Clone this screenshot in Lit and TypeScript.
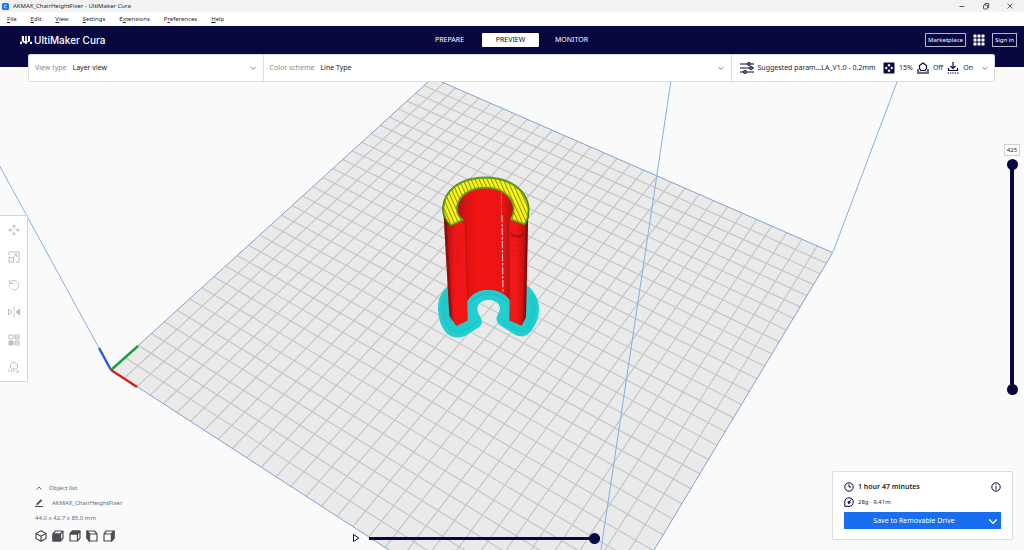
import { LitElement, html, svg, css } from "lit";
import { customElement } from "lit/decorators.js";

type Point = [number, number];

/* Corners of the build plate as seen by the camera. */
const ORIGIN: Point = [111.3, 370];
const FRONT: Point = [579.8, 673.6];
const RIGHT: Point = [832.7, 252.7];
const BACK: Point = [432.5, 77.9];
const CELLS = 30;

/* Perspective map from plate space (0..1, 0..1) to the view. */
const project = (() => {
  const [x0, y0] = ORIGIN;
  const [x1, y1] = FRONT;
  const [x2, y2] = RIGHT;
  const [x3, y3] = BACK;
  const sx = x0 - x1 + x2 - x3;
  const sy = y0 - y1 + y2 - y3;
  const dx1 = x1 - x2, dx2 = x3 - x2, dy1 = y1 - y2, dy2 = y3 - y2;
  const den = dx1 * dy2 - dx2 * dy1;
  const g = (sx * dy2 - dx2 * sy) / den;
  const h = (dx1 * sy - sx * dy1) / den;
  const a = x1 * (1 + g) - x0, b = x3 * (1 + h) - x0;
  const d = y1 * (1 + g) - y0, e = y3 * (1 + h) - y0;
  return (u: number, v: number): Point => {
    const w = g * u + h * v + 1;
    return [(a * u + b * v + x0) / w, (d * u + e * v + y0) / w];
  };
})();

const segment = (p: Point, q: Point) =>
  `M${p[0].toFixed(2)} ${p[1].toFixed(2)}L${q[0].toFixed(2)} ${q[1].toFixed(2)}`;

const gridPath = () => {
  let d = "";
  for (let i = 1; i < CELLS; i++) {
    const t = i / CELLS;
    d += segment(project(t, 0), project(t, 1)) + segment(project(0, t), project(1, t));
  }
  return d;
};

const PLATE = [ORIGIN, FRONT, RIGHT, BACK].map((p) => p.join(",")).join(" ");

const RING =
  "M92 181 C78 167 69 150 70 128 C75 72 125 39 197 39 C268 39 320 75 325 128 C326 150 322 167 314 178 L272 163 C280 150 284 138 280 122 C272 88 240 68 197 68 C150 68 117 90 111 125 C109 142 116 156 128 165 Z";

@customElement("cura-scene")
export class CuraScene extends LitElement {
  static styles = css`
    :host { display: block; }
    svg { display: block; width: 100%; height: 100%; }
  `;

  render() {
    return html`<svg viewBox="0 67 1024 483" preserveAspectRatio="xMidYMid slice" role="img" aria-label="Sliced model on build plate">
      <defs>
        <pattern id="infill" width="11" height="11" patternUnits="userSpaceOnUse" patternTransform="rotate(-24)">
          <rect width="11" height="11" fill="#fbf614"></rect>
          <rect width="3" height="11" fill="#8f8f10"></rect>
        </pattern>
        <linearGradient id="shell" x1="0" x2="1" y1="0" y2="0">
          <stop offset="0" stop-color="#8c0c0c"></stop>
          <stop offset=".06" stop-color="#c41111"></stop>
          <stop offset=".14" stop-color="#f01616"></stop>
          <stop offset=".86" stop-color="#f01818"></stop>
          <stop offset=".95" stop-color="#c21212"></stop>
          <stop offset="1" stop-color="#7c0c0c"></stop>
        </linearGradient>
        <linearGradient id="bore" x1="0" x2="1" y1="0" y2="0">
          <stop offset="0" stop-color="#a00f0f"></stop>
          <stop offset=".16" stop-color="#dc1313"></stop>
          <stop offset=".4" stop-color="#f41414"></stop>
          <stop offset=".8" stop-color="#e81414"></stop>
          <stop offset="1" stop-color="#a81010"></stop>
        </linearGradient>
      </defs>

      <polygon points=${PLATE} fill="#eaeaea"></polygon>
      <path d=${gridPath()} stroke="#c6c6c8" stroke-width="1.2" fill="none"></path>
      <polygon points=${PLATE} fill="none" stroke="#7fa3d0"></polygon>

      <g transform="translate(420 165) scale(.3333)">
        <path d="M85 362C62 382 53 405 54 432C56 468 66 492 84 508C102 521 124 521 144 508L178 486C188 478 187 466 180 454C168 436 167 420 178 411C194 402 218 402 232 411C244 422 242 434 232 450C227 464 230 474 242 482L286 510C304 518 318 514 332 500C350 478 357 456 357 430C356 400 343 378 320 360Z" fill="#22cfd0"></path>
        <g fill="none" stroke="#17b0b4" stroke-width="1.5">
          <path d="M76 385C60 410 62 460 86 490C104 506 126 504 144 494L168 478"></path>
          <path d="M80 392C66 425 68 462 90 485C106 498 127 497 146 487L172 468"></path>
          <path d="M84 404C74 432 78 460 98 477C110 486 128 484 148 476"></path>
          <path d="M336 385C352 410 348 465 326 490C310 504 296 500 282 494L248 474"></path>
          <path d="M332 392C346 425 342 462 322 484C308 496 296 494 282 486L244 462"></path>
          <path d="M328 400C338 430 334 456 322 474"></path>
        </g>
        <path d="M70 130L88 452L109 483L143 467V405C160 382 182 375 205 375C230 375 252 384 268 404V467L305 482L318 456L325 130C310 80 270 55 197 55C125 55 80 80 70 130Z" fill="url(#shell)"></path>
        <path d="M109 125C115 88 150 66 197 66C242 66 274 88 283 122C284 142 278 158 266 178L268 404C252 384 230 375 205 375C182 375 160 382 143 405L136 178C118 160 108 142 109 125Z" fill="url(#bore)"></path>
        <path d="M70 135L80 170L98 470L88 452Z" fill="#6a0808" opacity=".45"></path>
        <path d="M325 135L318 170L308 476L318 456Z" fill="#6a0808" opacity=".45"></path>
        <path d="M136 178L143 405M266 170L268 404" stroke="#bc1010" stroke-width="3" fill="none"></path>
        <g fill="none" stroke="#d01313" stroke-width="1.500">
          <path d="M98 190C112 200 122 225 118 280M104 186C122 200 132 225 128 262M96 210C108 225 112 250 110 300M134 100C128 130 128 160 140 190M150 95C140 130 142 160 154 200"></path>
          <path d="M270 192C284 202 300 200 310 192M270 206C284 214 300 212 310 206M270 234C284 246 300 242 310 236M270 250C284 260 300 256 310 250M270 268C284 276 300 272 310 268"></path>
        </g>
        <path d="M270 198C284 216 302 212 312 200L312 210C300 220 284 222 272 212Z" fill="#a60d0d" opacity=".6"></path>
        <path d="M244 82V150" stroke="#f47070" stroke-width="2"></path>
        <path d="M246 150L249 384" stroke="#ffd0d0" stroke-width="3" stroke-dasharray="22 5 8 4"></path>
        <path d="M143 408C160 382 182 375 205 375C230 375 252 384 268 404V440L242 442C244 424 232 404 205 404C180 404 166 424 174 442L143 442Z" fill="#22cfd0"></path>
        <path d="M150 414C164 396 184 388 205 388C228 388 248 396 262 412M144 424C162 400 184 382 205 382C228 382 250 392 266 420" fill="none" stroke="#17b0b4" stroke-width="1.500"></path>
        <path d=${RING} fill="url(#infill)" stroke="#62a312" stroke-width="5"></path>
        <path d="M92 184C76 167 67 150 68 128C73 70 123 36 197 36C270 36 322 73 327 128C328 150 324 167 315 181" fill="none" stroke="#2d5a10" stroke-width="2"></path>
      </g>

      <g fill="none" stroke="#86afde">
        <path d="M-20 130L99 348M833 252L897 82L903 66M592 610L673 67"></path>
      </g>
      <g fill="none" stroke-width="2.400">
        <path d="M111 370L99 348" stroke="#1f62d6"></path>
        <path d="M111 370L138 346" stroke="#1f9c46"></path>
        <path d="M111 370L137 387" stroke="#cc2222"></path>
      </g>
    </svg>`;
  }
}

const chevron = (cls = "chev") =>
  html`<svg class=${cls} viewBox="0 0 8 8" aria-hidden="true"><path d="M1.500 3L4 5.500L6.500 3" fill="none" stroke="currentColor" stroke-width=".9"></path></svg>`;

const tools: { name: string; icon: unknown }[] = [
  { name: "Move", icon: svg`<path d="M6 1.5V4.6M6 7.4V10.500M1.5 6H4.6M7.4 6H10.500"></path><path d="M6 .3L8 2.700H4ZM6 11.700L8 9.300H4ZM.3 6L2.700 4V8ZM11.700 6L9.300 4V8Z" fill="currentColor" stroke="none"></path>` },
  { name: "Scale", icon: svg`<path d="M1 4V1H11V11H8M1 6.500H5.500V11H1ZM5.500 6.500L8.500 3.500M6 3.300H8.700V6"></path>` },
  { name: "Rotate", icon: svg`<path d="M2 3.500C4 1 8 .8 10 3.700C12 7.500 9 11 6 11"></path><path d="M1.500 6.500C2 9 4 10.800 6 11" stroke-dasharray="1.500 1"></path><path d="M1.500 1V4.500H5"></path>` },
  { name: "Mirror", icon: svg`<path d="M6 .5V11.500" stroke-dasharray="2 1"></path><path d="M11.500 3V9L8 6Z" fill="currentColor"></path><path d="M.5 3V9L4 6Z"></path>` },
  { name: "Per model settings", icon: svg`<path d="M1 1H5V5H1ZM7 1H11V5H7ZM7 7H11V11H7ZM7 9H11M7 3H11"></path><path d="M1 7H5V11H1Z" fill="currentColor"></path>` },
  { name: "Support blocker", icon: svg`<path d="M4 8L2.500 6.500V3.500L6 1L9.500 3.500V6.500L8 8H4M1 11V8M3.500 11V9M6 11V9M8.500 9.500L11 11.500M11 9.500L8.500 11.500"></path>` },
];

const cube = svg`<path d="M1 4H8.500V11H1ZM1 4L3.500 1H11V8L8.500 11M8.500 4L11 1"></path>`;
const views: { name: string; icon: unknown }[] = [
  { name: "3D view", icon: svg`<path d="M6 .8L11 3.500V8.500L6 11.200L1 8.500V3.500ZM1 3.500L6 6.200L11 3.500M6 6.200V11"></path>` },
  { name: "Front view", icon: svg`${cube}<path d="M1 4H8.500V11H1Z" fill="currentColor"></path>` },
  { name: "Top view", icon: svg`${cube}<path d="M1 4L3.500 1H11L8.500 4Z" fill="currentColor"></path>` },
  { name: "Left view", icon: svg`<g transform="matrix(-1 0 0 1 12 0)">${cube}<path d="M8.500 4L11 1V8L8.500 11Z" fill="currentColor"></path></g>` },
  { name: "Right view", icon: svg`${cube}<path d="M8.500 4L11 1V8L8.500 11Z" fill="currentColor"></path>` },
];

@customElement("app-root")
export class AppRoot extends LitElement {
  static styles = css`
    :host {
      display: flex;
      flex-direction: column;
      min-height: 100vh;
      overflow: hidden;
      background: #fafafa;
      color: #24242c;
      font: 7px/10px "Noto Sans", sans-serif;
      --navy: #08073f;
    }
    * { box-sizing: border-box; }
    button, select, input {
      font: inherit;
      color: inherit;
      background: none;
      border: 0;
      padding: 0;
      margin: 0;
    }
    svg { display: block; flex: none; }
    a { color: inherit; text-decoration: none; }
    .icon { width: 12px; height: 12px; }
    .chev { width: 8px; height: 8px; color: #77777f; }

    .titlebar {
      display: flex;
      align-items: center;
      gap: 4px;
      height: 12px;
      padding: 0 10px 0 2px;
      background: #f2f2f2;
      font-size: 6px;
    }
    .app-icon { width: 7px; height: 7px; }
    .title { flex: 1; }
    .window-buttons { display: flex; gap: 16px; }
    .window-buttons svg { width: 8px; height: 8px; }

    .menu {
      display: flex;
      gap: 14px;
      height: 14px;
      align-items: center;
      padding: 0 7px;
      background: #fff;
      font-size: 6px;
    }
    .menu u { text-underline-offset: 1px; }

    .header {
      display: grid;
      grid-template-columns: 1fr auto 1fr;
      align-items: start;
      height: 41px;
      padding: 7px 7px 0 4px;
      background: var(--navy);
      color: #fff;
    }
    .brand {
      display: flex;
      align-items: center;
      gap: 2px;
      height: 14px;
      margin-left: 16px;
      font: 500 10px/14px Inter, sans-serif;
    }
    .brand svg { width: 12px; height: 8px; }
    .tabs { display: flex; gap: 4px; }
    .tab {
      width: 57px;
      height: 14px;
      border-radius: 1px;
      text-align: center;
      line-height: 14px;
    }
    .tab.active { background: #fff; color: var(--navy); }
    .account {
      display: flex;
      justify-content: flex-end;
      align-items: center;
      gap: 7px;
      height: 14px;
      font-size: 6px;
    }
    .outlined {
      height: 14px;
      padding: 0 2px;
      border: 1px solid #b4b4c8;
      line-height: 12px;
    }

    .stage {
      position: relative;
      z-index: 1;
      display: grid;
      grid-template-columns: 235fr 469fr 263fr;
      height: 28px;
      margin: -13px 29px 0 28px;
      background: #fff;
      border: 1px solid #dcdce0;
      border-radius: 2px;
    }
    .field {
      display: flex;
      align-items: center;
      gap: 6px;
      padding: 0 6px;
      border-right: 1px solid #dcdce0;
    }
    .field label { color: #8c8c92; }
    .pick { position: relative; flex: 1; display: flex; align-items: center; }
    .pick select { appearance: none; flex: 1; height: 20px; line-height: 20px; }
    .pick svg { position: absolute; right: 0; pointer-events: none; }
    .settings {
      display: flex;
      align-items: center;
      gap: 4px;
      padding: 0 5px 0 8px;
      white-space: nowrap;
    }
    .settings svg { color: var(--navy); }
    .settings .sliders { width: 14px; height: 12px; }
    .profile { flex: 1; text-align: left; }
    .settings .chev { margin-left: 4px; color: #77777f; }

    .work { position: relative; flex: 1; margin-top: -15px; min-height: 400px; }
    .scene { position: absolute; inset: 0; }

    .toolbar {
      position: absolute;
      left: 0;
      top: 148px;
      display: grid;
      grid-auto-rows: 1fr;
      width: 28px;
      height: 167px;
      background: #fff;
      border: 1px solid #d4d4da;
      border-left: 0;
      border-radius: 0 2px 2px 0;
      color: #bdbdc5;
    }
    .toolbar button { display: grid; place-items: center; }

    .layers {
      position: absolute;
      right: 4px;
      top: 77px;
      display: grid;
      justify-items: center;
      gap: 3px;
    }
    .layer-number {
      width: 16px;
      height: 12px;
      background: #fff;
      border: 1px solid #d0d0d6;
      text-align: center;
      font-size: 6px;
    }
    .range { display: grid; height: 236px; width: 12px; }
    .range input {
      grid-area: 1 / 1;
      appearance: none;
      writing-mode: vertical-lr;
      direction: rtl;
      width: 12px;
      height: 236px;
      pointer-events: none;
    }
    input[type="range"]::-webkit-slider-thumb {
      appearance: none;
      width: 11px;
      height: 11px;
      border-radius: 50%;
      background: var(--navy);
      pointer-events: auto;
    }
    .range input::-webkit-slider-runnable-track {
      background: linear-gradient(var(--navy), var(--navy)) center / 4px 94% no-repeat;
    }

    .player {
      position: absolute;
      left: 352px;
      right: 424px;
      bottom: 6px;
      display: flex;
      align-items: center;
      gap: 9px;
      height: 12px;
    }
    .player svg { width: 8px; height: 10px; }
    .player input { appearance: none; flex: 1; min-width: 0; height: 12px; }
    .player input::-webkit-slider-runnable-track {
      background: linear-gradient(var(--navy), var(--navy)) center / 100% 3px no-repeat;
    }

    .objects {
      position: absolute;
      left: 35px;
      bottom: 8px;
      display: grid;
      gap: 5px;
      color: #6a6a70;
      font-size: 6px;
    }
    .row { display: flex; align-items: center; gap: 6px; height: 10px; }
    .row svg { width: 8px; height: 8px; }
    .row.name { gap: 9px; }
    .views { display: flex; gap: 5px; margin-top: 2px; color: #4c4c54; }
    .views button { display: block; }

    .output {
      position: absolute;
      right: 11px;
      bottom: 10px;
      display: grid;
      gap: 5px;
      width: 181px;
      padding: 10px 11px;
      background: #fff;
      border: 1px solid #dcdce0;
      border-radius: 1px;
    }
    .line { display: flex; align-items: center; gap: 4px; height: 10px; color: var(--navy); }
    .line svg { width: 10px; height: 10px; }
    .line span, .line strong { flex: 1; color: #24242c; }
    .line strong { font-weight: 600; }
    .line span { font-size: 6px; }
    .save { display: flex; height: 17px; background: #196ef0; color: #fff; }
    .save .main { flex: 1; }
    .save .more { width: 17px; display: grid; place-items: center; }
    .save .chev { color: #fff; width: 12px; height: 12px; }
  `;

  render() {
    const menus = ["File", "Edit", "View", "Settings", "Extensions", "Preferences", "Help"];
    const key: Record<string, number> = { Extensions: 1, Preferences: 1 };
    return html`
      <div class="titlebar">
        <svg class="app-icon" viewBox="0 0 7 7"><rect width="7" height="7" rx="1.500" fill="#196ef0"></rect><path d="M5 2.200H2.300V4.800H5" fill="none" stroke="#cfe2ff" stroke-width=".8"></path></svg>
        <span class="title">AKMAX_ChairHeightFixer - UltiMaker Cura</span>
        <div class="window-buttons">
          <button aria-label="Minimise"><svg viewBox="0 0 8 8"><path d="M1.500 4.500H6.500" stroke="#333" stroke-width=".8"></path></svg></button>
          <button aria-label="Restore"><svg viewBox="0 0 8 8" fill="none" stroke="#333" stroke-width=".8"><rect x="1.500" y="3" width="4" height="4" rx=".8"></rect><path d="M3 3V1.600H6.700V5.500H5.500"></path></svg></button>
          <button aria-label="Close"><svg viewBox="0 0 8 8"><path d="M1.500 1.500L6.500 6.500M6.500 1.500L1.500 6.500" stroke="#333" stroke-width=".8"></path></svg></button>
        </div>
      </div>
      <nav class="menu">
        ${menus.map((m) => {
          const k = key[m] ?? 0;
          return html`<a href="#">${m.slice(0, k)}<u>${m[k]}</u>${m.slice(k + 1)}</a>`;
        })}
      </nav>
      <header class="header">
        <div class="brand">
          <svg viewBox="0 0 12 8" fill="#fff"><path d="M1.800 0H4V4.800A.7 .7 0 0 0 5.200 4.800V0H6.800V4.800A.7 .7 0 0 0 8 4.800V0H10V5.600H8.600A1.500 1.500 0 0 1 6.800 6.500V8H5.200V6.500A1.800 1.800 0 0 1 2.600 5.600H1.800ZM0 5.800H2V8H0ZM10 5.800H12V8H10Z"></path></svg>
          <span>UltiMaker Cura</span>
        </div>
        <nav class="tabs">
          <button class="tab">PREPARE</button>
          <button class="tab active">PREVIEW</button>
          <button class="tab">MONITOR</button>
        </nav>
        <div class="account">
          <button class="outlined">Marketplace</button>
          <button aria-label="Applications"><svg class="icon" viewBox="0 0 12 12" fill="#fff">
            ${[0, 4, 8].map((y) => [0, 4, 8].map((x) => svg`<rect x=${x + 0.5} y=${y + 0.5} width="3" height="3" rx=".6"></rect>`))}
          </svg></button>
          <button class="outlined">Sign in</button>
        </div>
      </header>

      <section class="stage">
        <div class="field">
          <label for="view">View type</label>
          <div class="pick"><select id="view"><option>Layer view</option></select>${chevron()}</div>
        </div>
        <div class="field">
          <label for="scheme">Color scheme</label>
          <div class="pick"><select id="scheme"><option>Line Type</option></select>${chevron()}</div>
        </div>
        <button class="settings">
          <svg class="sliders" viewBox="0 0 14 12" fill="#fff" stroke="currentColor" stroke-width="1.200"><path d="M0 2H14M0 6H14M0 10H14"></path><circle cx="9" cy="2" r="1.300"></circle><circle cx="11" cy="6" r="1.300"></circle><circle cx="5" cy="10" r="1.300"></circle></svg>
          <span class="profile">Suggested param...LA_V1.0 - 0.2mm</span>
          <svg class="icon" viewBox="0 0 12 12"><rect x=".5" y=".5" width="11" height="11" rx="1" fill="currentColor"></rect><path d="M6 1.800L7.600 3.200L6 4.700L4.400 3.200ZM6 7.300L7.600 8.800L6 10.200L4.400 8.800ZM1.800 6L3.200 4.400L4.700 6L3.200 7.600ZM7.300 6L8.800 4.400L10.200 6L8.800 7.600Z" fill="#fff"></path></svg>
          <span>15%</span>
          <svg class="icon" viewBox="0 0 12 12" fill="none" stroke="currentColor" stroke-width="1.200"><path d="M4 8.500L2.500 6.500V3.500L6 1L9.500 3.500V6.500L8 8.500Z"></path><path d="M1 7V12M3 9.500V12M5 10V12M7 10V12M9 9.500V12M11 7V12"></path></svg>
          <span>Off</span>
          <svg class="icon" viewBox="0 0 12 12" fill="none" stroke="currentColor" stroke-width="1.200"><path d="M6 0V6.500M3.500 4L6 6.500L8.500 4M1.500 6V8.500H10.500V6"></path><path d="M.5 11H11.500" stroke-dasharray="1.400 1"></path></svg>
          <span>On</span>
          ${chevron()}
        </button>
      </section>

      <main class="work">
        <cura-scene class="scene"></cura-scene>

        <div class="toolbar">
          ${tools.map((t) => html`<button aria-label=${t.name}><svg class="icon" viewBox="0 0 12 12" fill="none" stroke="currentColor">${t.icon}</svg></button>`)}
        </div>

        <div class="layers">
          <input class="layer-number" aria-label="Layer" .value=${"425"}>
          <div class="range">
            <input type="range" aria-label="Lowest layer" min="1" max="425" .value=${"1"}>
            <input type="range" aria-label="Highest layer" min="1" max="425" .value=${"425"}>
          </div>
        </div>

        <div class="player">
          <button aria-label="Play"><svg viewBox="0 0 8 10"><path d="M1.500 1.500V8.500L6.800 5Z" fill="#fff" stroke="#08073f"></path></svg></button>
          <input type="range" aria-label="Path position" min="0" max="100" .value=${"100"}>
        </div>

        <div class="objects">
          <button class="row"><svg viewBox="0 0 8 8"><path d="M1.500 5.500L4 3L6.500 5.500" fill="none" stroke="currentColor"></path></svg>Object list</button>
          <div class="row name"><svg viewBox="0 0 8 8"><path d="M1 6.200L1.600 4.400L5.800 .2L7.200 1.600L3 5.800ZM0 7H8V8H0Z" fill="#4c4c54"></path></svg><span>AKMAX_ChairHeightFixer</span></div>
          <span>44.0 x 42.7 x 85.0 mm</span>
          <div class="views">
            ${views.map((v) => html`<button aria-label=${v.name}><svg class="icon" viewBox="0 0 12 12" fill="none" stroke="currentColor" stroke-width="1.200" stroke-linejoin="round">${v.icon}</svg></button>`)}
          </div>
        </div>

        <section class="output">
          <div class="line">
            <svg viewBox="0 0 10 10" fill="none" stroke="currentColor"><circle cx="5" cy="5" r="4.200"></circle><path d="M5 2.200V5H7.200"></path></svg>
            <strong>1 hour 47 minutes</strong>
            <svg viewBox="0 0 10 10" fill="none" stroke="currentColor"><circle cx="5" cy="5" r="4.200"></circle><path d="M5 2.200V3.300M5 4.200V7.600"></path></svg>
          </div>
          <div class="line">
            <svg viewBox="0 0 10 10" fill="none" stroke="currentColor"><path d="M.8 9.300V5A4.200 4.200 0 1 1 5 9.300Z"></path><circle cx="5" cy="5.400" r="1" fill="currentColor"></circle><path d="M5 5.400L7 2.600"></path></svg>
            <span>28g · 9.41m</span>
          </div>
          <div class="save">
            <button class="main">Save to Removable Drive</button>
            <button class="more" aria-label="More destinations">${chevron()}</button>
          </div>
        </section>
      </main>
    `;
  }
}
